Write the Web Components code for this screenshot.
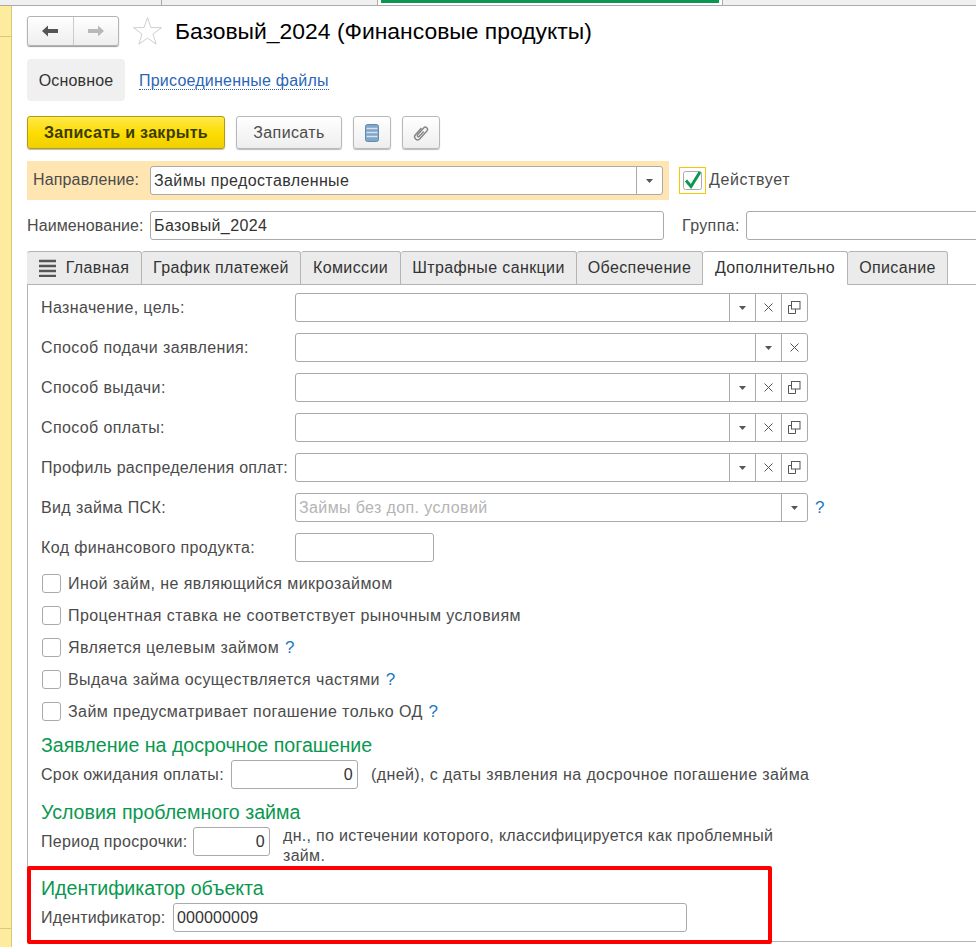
<!doctype html>
<html lang="ru"><head><meta charset="utf-8"><title>Базовый_2024</title>
<style>
html,body{margin:0;height:947px;overflow:hidden;background:#fff}
body{font:16px "Liberation Sans",Arial,sans-serif;letter-spacing:.38px;color:#4b4b4b}
</style></head><body>
<app-frame>
<top-strip slot="top"></top-strip>
<page-head>Базовый_2024 (Финансовые продукты)</page-head>
<section-nav></section-nav>
<cmd-bar></cmd-bar>
<dir-row></dir-row>
<name-row></name-row>
<tab-bar></tab-bar>
<tab-panel>
  <form-row label="Назначение, цель:"><x-field w="513" btn="dxo"></x-field></form-row>
  <form-row label="Способ подачи заявления:"><x-field w="513" btn="dx"></x-field></form-row>
  <form-row label="Способ выдачи:"><x-field w="513" btn="dxo"></x-field></form-row>
  <form-row label="Способ оплаты:"><x-field w="513" btn="dxo"></x-field></form-row>
  <form-row label="Профиль распределения оплат:" ls=".27"><x-field w="513" btn="dxo"></x-field></form-row>
  <form-row label="Вид займа ПСК:"><x-field w="513" btn="d"><span style="color:#b4b4b4">Займы без доп. условий</span></x-field><help-mark style="margin-left:7px">?</help-mark></form-row>
  <form-row label="Код финансового продукта:"><x-field w="139"></x-field></form-row>
  <div style="height:1px"></div>
  <x-check>Иной займ, не являющийся микрозаймом</x-check>
  <x-check>Процентная ставка не соответствует рыночным условиям</x-check>
  <x-check>Является целевым займом <help-mark style="margin-left:1px">?</help-mark></x-check>
  <x-check>Выдача займа осуществляется частями <help-mark style="margin-left:1px">?</help-mark></x-check>
  <x-check>Займ предусматривает погашение только ОД <help-mark style="margin-left:1px">?</help-mark></x-check>
  <sec-title>Заявление на досрочное погашение</sec-title>
  <div style="display:flex;align-items:center;height:29px;margin-top:4px"><span style="width:190px;flex:none;letter-spacing:.28px">Срок ожидания оплаты:</span><x-field w="127" align="right">0</x-field><span style="margin-left:13px;white-space:nowrap;letter-spacing:.4px">(дней), с даты зявления на досрочное погашение займа</span></div>
  <sec-title style="margin-top:12px">Условия проблемного займа</sec-title>
  <div style="display:flex;align-items:flex-start;margin-top:4px;height:39px"><span style="width:152px;flex:none;line-height:29px;letter-spacing:.32px">Период просрочки:</span><x-field w="77" align="right">0</x-field><span style="margin-left:13px;width:500px;flex:none;line-height:20px;margin-top:-1px;letter-spacing:.31px">дн., по истечении которого, классифицируется как проблемный займ.</span></div>
  <red-box>
    <sec-title>Идентификатор объекта</sec-title>
    <div style="display:flex;align-items:center;height:29px;margin-top:4px"><span style="width:132px;flex:none;letter-spacing:.16px">Идентификатор:</span><x-field w="514"><span style="letter-spacing:.12px">000000009</span></x-field></div>
  </red-box>
</tab-panel>
</app-frame>
<script>
const def=(n,css,html)=>customElements.define(n,class extends HTMLElement{constructor(){super();this.attachShadow({mode:'open'}).innerHTML=`<style>${css}</style>${html}`}});

def('app-frame',`:host{display:grid;grid-template-columns:12px 1fr;grid-template-rows:6px 1fr;width:976px;height:947px;overflow:hidden}
.t{grid-column:1/3}
.s{background:#fdeb9e;border-right:1px solid #d8c878;box-sizing:border-box;display:flex;flex-direction:column}
.s i{display:block;height:30px;border-bottom:1px solid #d8c878}
.s b{flex:1}
.s u{display:block;height:18px;border-top:1px solid #d8c878}
.m{padding-left:15px;min-width:0}`,
`<div class="t"><slot name="top"></slot></div><div class="s"><i></i><b></b><u></u></div><div class="m"><slot></slot></div>`);

def('top-strip',`:host{display:flex;height:6px;box-sizing:border-box;background:#f0f0f0;border-bottom:1px solid #aaa}
div{border-right:1px solid #aaa;box-sizing:border-box;height:5px}
.a{background:#fff;padding:0 3px;border-right:1px solid #aaa}
.a i{display:block;height:3px;background:#0a9850}`,
`<div style="width:162px"></div><div style="width:216px"></div><div class="a" style="width:345px"><i></i></div>`);

def('page-head',`:host{display:flex;align-items:center;height:30px;margin-top:10px;font-size:22.9px;letter-spacing:0;color:#000;white-space:nowrap}
.n{display:flex;width:92px;height:30px;box-sizing:border-box;border:1px solid #b4b4b4;border-radius:3px;background:linear-gradient(#fff,#eee);box-shadow:0 1px 1px #999}
.n span{flex:1;display:flex;align-items:center;justify-content:center}
.n span+span{border-left:1px solid #ccc}
.st{margin:0 12px 0 13px;display:block;flex:none}`,
`<div class="n"><span><svg width="18" height="12" viewBox="0 0 18 12"><path d="M1 6 7 .5V4h10v4H7v3.500z" fill="#555"/></svg></span><span><svg width="18" height="12" viewBox="0 0 18 12"><path d="M17 6 11 .5V4H1v4h10v3.500z" fill="#b8b8b8"/></svg></span></div>
<svg class="st" width="31" height="30" viewBox="0 0 31 30"><path d="M15.500 1.500l3.400 10 10.600.2-8.500 6.300 3.100 10.200-8.600-6.100-8.600 6.100 3.100-10.200-8.500-6.300 10.600-.2z" fill="#fff" stroke="#cfcfcf"/></svg><slot></slot>`);

def('section-nav',`:host{display:flex;align-items:center;height:42px;margin-top:13px}
.o{display:flex;align-items:center;justify-content:center;width:98px;height:42px;background:#f0f0f0;border-radius:4px;color:#333;letter-spacing:.15px;padding-top:1px;box-sizing:border-box}
a{margin-left:14px;margin-top:1px;color:#2a66b8;border-bottom:1px dotted #2a66b8;line-height:17px;text-decoration:none;letter-spacing:.22px}`,
`<div class="o">Основное</div><a>Присоединенные файлы</a>`);

def('cmd-bar',`:host{display:flex;height:33px;margin-top:15px;gap:11px}
div{box-sizing:border-box;height:33px;display:flex;align-items:center;justify-content:center;border:1px solid #b8b8b8;border-radius:3px;background:linear-gradient(#fff,#eee);color:#4b4b4b;box-shadow:0 1px 1px #bbb}
.y{width:198px;background:linear-gradient(#ffe94a,#fcdc00 55%,#f0cf00);border-color:#b49a10;font-weight:bold;color:#3c3c00;letter-spacing:.3px}
.w{width:106px}.i{width:38px;padding:0}`,
`<div class="y">Записать и закрыть</div><div class="w">Записать</div>
<div class="i"><svg width="14" height="18" viewBox="0 0 14 18"><rect x=".5" y=".5" width="13" height="17" rx="2" fill="#7fa5c9" stroke="#5f8cb3"/><path d="M1.500 4.500h11M1.500 8.500h11M1.500 12.500h11" stroke="#d4e2ef" stroke-width="1.500"/></svg></div>
<div class="i"><svg width="18" height="18" viewBox="0 0 18 18"><path d="M6 5v9a3 3 0 0 0 6 0V3.500a2.200 2.200 0 0 0-4.400 0V12.500a1.200 1.200 0 0 0 2.400 0V6" fill="none" stroke="#858585" stroke-width="1.400" transform="rotate(42 9 9)"/></svg></div>`);

def('dir-row',`:host{display:flex;align-items:center;margin-top:12px;height:39px}
.b{display:flex;align-items:center;width:642px;height:39px;box-sizing:border-box;padding-left:6px;background:#fee5b2}
.b span{width:117px;flex:none;letter-spacing:.15px;margin-top:-1px}
.c{display:flex;align-items:center;justify-content:center;box-sizing:border-box;width:27px;height:27px;margin-left:10px;border:1px solid #f5c800;flex:none}
.d{margin-left:3px;letter-spacing:.6px;margin-top:-2px}`,
`<div class="b"><span>Направление:</span><x-field w="513" btn="d">Займы предоставленные</x-field></div>
<div class="c"><svg width="20" height="21" viewBox="0 0 20 21"><rect x=".5" y="1.500" width="18" height="18" rx="2" fill="#fff" stroke="#aaa"/><path d="M3 10.500l5 6L17 2" fill="none" stroke="#0a9850" stroke-width="3"/></svg></div><span class="d">Действует</span>`);

def('name-row',`:host{display:flex;align-items:center;margin-top:11px;height:29px}
span{flex:none}
.l{width:123px;letter-spacing:.1px}.g{margin-left:18px;width:64px}`,
`<span class="l">Наименование:</span><x-field w="514">Базовый_2024</x-field><span class="g">Группа:</span><x-field w="260"></x-field>`);

def('tab-bar',`:host{display:flex;margin-top:11px;height:34px;box-sizing:border-box;border-bottom:1px solid #b4b4b4}
div{box-sizing:border-box;height:34px;display:flex;align-items:center;justify-content:center;background:#ebebeb;border:1px solid #b4b4b4;border-left:0;border-radius:3px 3px 0 0;color:#333;white-space:nowrap;padding-bottom:1px;flex:none}
div:first-child{border-left:1px solid #b4b4b4;padding-left:1px}
.a{background:#fff;border-bottom-color:#fff}
svg{margin-right:10px}`,
`<div style="width:115px"><svg width="17" height="18" viewBox="0 0 17 18"><path d="M0 2h17M0 7h17M0 12h17M0 17h17" stroke="#555" stroke-width="2.500"/></svg>Главная</div>
<div style="width:159px">График платежей</div><div style="width:100px">Комиссии</div><div style="width:176px">Штрафные санкции</div><div style="width:126px">Обеспечение</div><div class="a" style="width:145px">Дополнительно</div><div style="width:100px">Описание</div>`);

def('tab-panel',`:host{display:block;box-sizing:border-box;height:657px;border-left:1px solid #b4b4b4;border-bottom:1px solid #b4b4b4;padding:8px 0 0 13px}`,`<slot></slot>`);

customElements.define('form-row',class extends HTMLElement{constructor(){super();const s=this.attachShadow({mode:'open'});
s.innerHTML=`<style>:host{display:flex;align-items:center;height:29px;margin-bottom:11px}span{width:254px;flex:none}</style><span></span><slot></slot>`}
connectedCallback(){const l=this.shadowRoot.querySelector('span');l.textContent=this.getAttribute('label');if(this.hasAttribute('ls'))l.style.letterSpacing=this.getAttribute('ls')+'px'}});

const ICON={d:'<svg width="7" height="4" viewBox="0 0 7 4"><path d="M0 0h7L3.500 4z" fill="#555"/></svg>',
x:'<svg width="9" height="9" viewBox="0 0 9 9"><path d="M.5.500l8 8M8.500.500l-8 8" stroke="#555"/></svg>',
o:'<svg width="13" height="13" viewBox="0 0 13 13"><rect x="3.500" y=".5" width="8.500" height="7.500" fill="none" stroke="#555"/><path d="M3.500 4.500H.5v8h7V8" fill="none" stroke="#555"/></svg>'};
customElements.define('x-field',class extends HTMLElement{constructor(){super();const s=this.attachShadow({mode:'open'});
s.innerHTML=`<style>:host{display:inline-flex;flex:none;box-sizing:border-box;height:29px;border:1px solid #aaa;border-radius:3px;background:#fff;color:#333;overflow:hidden}
.v{flex:1;padding:0 3px;line-height:27px;white-space:nowrap;min-width:0}
.b{width:26px;box-sizing:border-box;border-left:1px solid #aaa;display:flex;align-items:center;justify-content:center}</style><div class="v"><slot></slot></div>`}
connectedCallback(){this.style.width=this.getAttribute('w')+'px';
const a=this.getAttribute('align');if(a){const v=this.shadowRoot.querySelector('.v');v.style.textAlign=a;v.style.paddingRight='4px'}
for(const c of (this.getAttribute('btn')||'')){const d=document.createElement('div');d.className='b';d.innerHTML=ICON[c];this.shadowRoot.append(d)}}});

def('x-check',`:host{display:flex;align-items:flex-start;height:19px;margin-bottom:13px;white-space:nowrap;letter-spacing:.42px}
i{display:block;width:19px;height:19px;box-sizing:border-box;border:1px solid #aaa;border-radius:3px;margin:0 7px 0 1px;flex:none}
span{line-height:20px}`,`<i></i><span><slot></slot></span>`);
def('help-mark',`:host{color:#1a78c2;font-size:17px}`,`<slot></slot>`);
def('sec-title',`:host{display:block;font-size:19.6px;letter-spacing:0;line-height:22px;color:#0a9850}`,`<slot></slot>`);
def('red-box',`:host{display:block;box-sizing:border-box;width:745px;height:78px;margin:0 0 0 -14px;padding:7px 0 0 10px;border:4px solid #f00;border-radius:2px}`,`<slot></slot>`);
</script>
</body></html>
